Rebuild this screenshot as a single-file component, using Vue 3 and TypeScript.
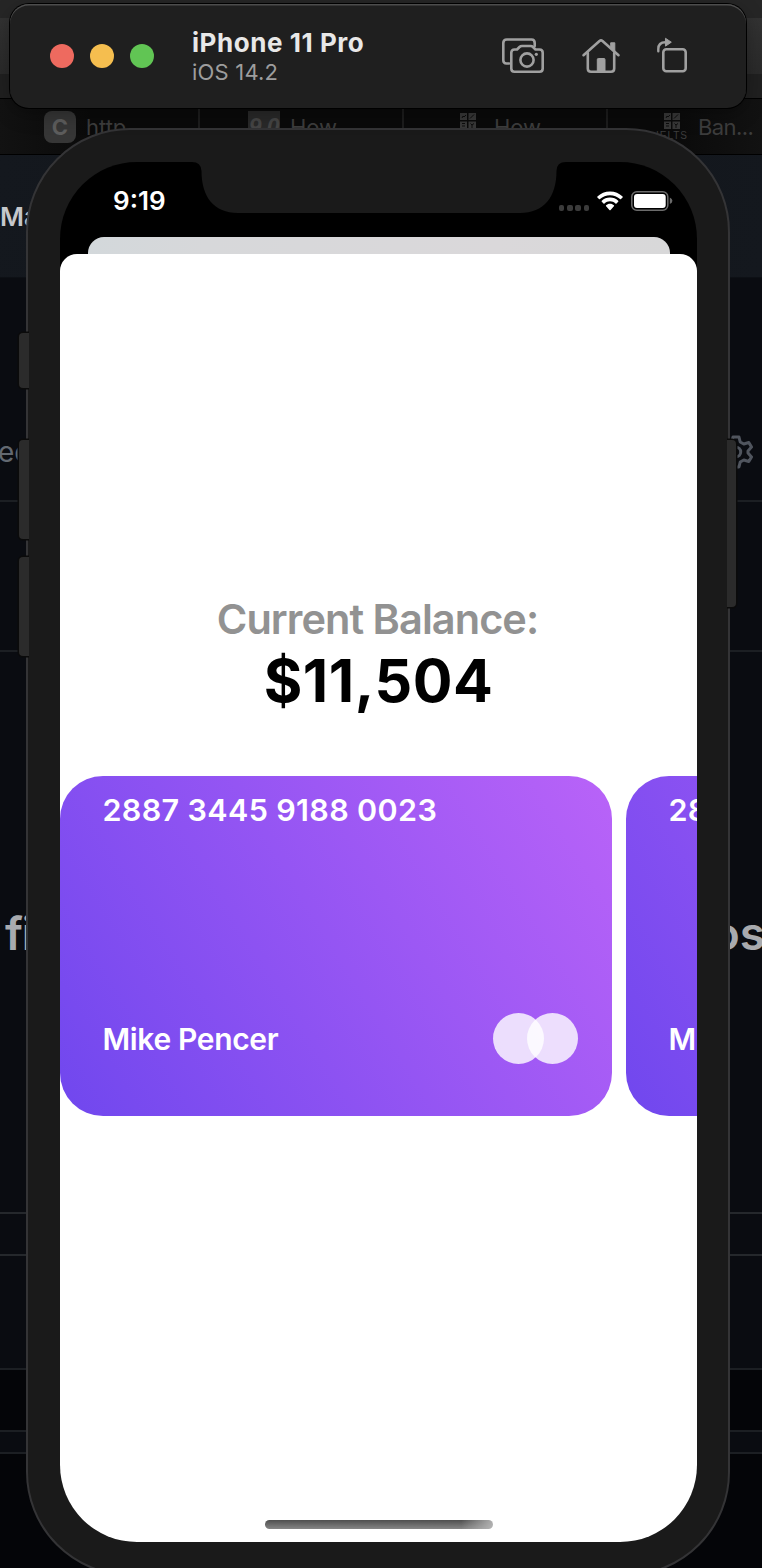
<script setup lang="ts">
interface Tab { icon: 'letter' | 'score' | 'ielts'; label: string }
interface BankCard { id: number; number: string; holder: string }

const tabs: Tab[] = [
  { icon: 'letter', label: 'http.' },
  { icon: 'score', label: 'How' },
  { icon: 'ielts', label: 'How' },
  { icon: 'ielts', label: 'Ban...' },
]
const cards: BankCard[] = [
  { id: 1, number: '2887 3445 9188 0023', holder: 'Mike Pencer' },
  { id: 2, number: '2887 3445 9188 0023', holder: 'Mike Pencer' },
]
</script>

<template>
  <div class="desktop">
    <div class="browser">
      <div class="chrome-top"></div>
      <div class="chrome-address"></div>
      <div class="chrome-bottom"></div>
      <div class="tabs">
        <div v-for="(tab, i) in tabs" :key="i" class="tab">
          <span v-if="tab.icon === 'letter'" class="fav-letter">C</span>
          <span v-else-if="tab.icon === 'score'" class="fav-score">9.0</span>
          <span v-else class="fav-ielts">
            <svg width="16" height="16" viewBox="0 0 16 16">
              <path d="M0 0h7v7H0zM8.500 0H16v7H8.500zM0 8.500h7V16H0zM8.500 8.500H16V16H8.500z" fill="#383838" />
              <path d="M2 5l1-2 1 1 2-2M10 5.500l4-4M2 10.500h3M2 13h3M10.500 10.500l1.500 1.500 2-1.500M12 12v3" stroke="#0c0c0c" fill="none" />
            </svg>
            <small>IELTS</small>
          </span>
          <span class="tab-label">{{ tab.label }}</span>
        </div>
      </div>
      <div class="page-head"><span>Ma</span></div>
      <div class="page-nav">
        <span>ec</span>
        <svg class="gear" width="34" height="34" viewBox="0 0 34 34" fill="none" stroke="#50555e" stroke-width="3">
          <circle cx="17" cy="17" r="4.700" />
          <path stroke-linejoin="round" d="M14 2h6l1.200 5 3.600 2 5-1.500 2.700 4.600L29 16v2l3.500 3.900-2.700 4.600-5-1.500-3.600 2-1.200 5h-6l-1.200-5-3.600-2-5 1.500-2.700-4.600L5 18v-2l-3.500-3.900 2.700-4.600 5 1.500 3.600-2z" />
        </svg>
      </div>
      <div class="row row-toolbar"></div>
      <div class="row row-hero"><span class="head">fi</span><span class="tail">os</span></div>
      <div class="row row-thin"></div>
      <div class="row row-list"></div>
      <div class="row row-gap"></div>
      <div class="row row-strip"></div>
      <div class="row row-foot"></div>
    </div>

    <div class="side-key key-mute"></div>
    <div class="side-key key-up"></div>
    <div class="side-key key-down"></div>
    <div class="phone">
      <div class="screen">
        <div class="back-sheet"></div>
        <div class="status">
          <span class="clock">9:19</span>
          <div class="indicators">
            <div class="dots"><i v-for="n in 4" :key="n"></i></div>
            <svg class="wifi" width="26" height="20" viewBox="0 0 26 20" fill="#fff">
              <path d="M13 .5C18 .5 22.300 2.400 25.600 5.500Q26 6 25.600 6.500L24 8.100Q23.500 8.500 23 8.100C20.200 5.500 16.800 4.200 13 4.200S5.800 5.500 3 8.100Q2.500 8.500 2 8.100L.4 6.500Q0 6 .4 5.500C3.700 2.400 8 .5 13 .5z" />
              <path d="M13 6.600c3.300 0 6 1.200 8.200 3.200q.5.500 0 1l-1.700 1.700q-.5.400-1 0C17 11.200 15.200 10.300 13 10.300s-4 .9-5.500 2.200q-.5.400-1 0L4.800 10.800q-.5-.5 0-1C7 7.800 9.700 6.600 13 6.600z" />
              <path d="M13 12.700c1.600 0 2.900.6 3.900 1.500q.5.500 0 1l-3.300 3.800q-.6.500-1.200 0l-3.300-3.800q-.5-.5 0-1c1-.9 2.300-1.500 3.900-1.500z" />
            </svg>
            <svg class="battery" width="42" height="20" viewBox="0 0 42 20">
              <rect x=".8" y=".8" width="36" height="18.400" rx="5" fill="none" stroke="#6b6b6b" stroke-width="1.500" />
              <rect x="3" y="3" width="31.700" height="14" rx="3" fill="#fff" />
              <path d="M38.800 6.500q2.600 1.200 2.600 3.300t-2.600 3.300z" fill="#6b6b6b" />
            </svg>
          </div>
        </div>
        <div class="sheet">
          <div class="balance">
            <span class="balance-label">Current Balance:</span>
            <span class="balance-value">$11,504</span>
          </div>
          <div class="cards">
            <div v-for="card in cards" :key="card.id" class="card">
              <span class="card-number">{{ card.number }}</span>
              <div class="card-foot">
                <span class="card-holder">{{ card.holder }}</span>
                <div class="brand"><i></i><i></i></div>
              </div>
            </div>
          </div>
          <div class="home-bar"></div>
        </div>
        <svg class="notch" width="380" height="52" viewBox="0 0 380 52">
          <path d="M0 0H4Q13 0 13.500 9C13.500 35 26 51 50 51H332C356 51 368.500 35 368.500 9Q368.500 0 378 0z" fill="#1a1a1a" />
        </svg>
      </div>
    </div>
    <div class="side-key key-power"></div>

    <div class="window-bar">
      <div class="lights"><i class="red"></i><i class="yellow"></i><i class="green"></i></div>
      <div class="titles">
        <span class="device">iPhone 11 Pro</span>
        <span class="os">iOS 14.2</span>
      </div>
      <div class="actions">
        <svg width="44" height="38" viewBox="0 0 44 38" fill="none" stroke="#a0a0a0" stroke-width="2.600" stroke-linejoin="round" stroke-linecap="round">
          <path d="M8 26.500H5.500Q2.300 26.500 2.300 23.300V6Q2.300 2.500 5.800 2.500H30.500Q33.700 2.500 33.700 6V9" />
          <path d="M13.500 12.500H16L18.500 10Q19.500 9 21 9H29.500Q31 9 32 10L34.500 12.500H38.500Q41.700 12.500 41.700 15.700V31.500Q41.700 34.700 38.500 34.700H13.500Q10.300 34.700 10.300 31.500V15.700Q10.300 12.500 13.500 12.500z" />
          <circle cx="26" cy="23" r="6.600" />
          <circle cx="35.300" cy="17.300" r="1.600" fill="#a0a0a0" stroke="none" />
        </svg>
        <svg width="40" height="38" viewBox="0 0 40 38" fill="none" stroke="#a0a0a0" stroke-width="2.600" stroke-linejoin="round" stroke-linecap="round">
          <path d="M2.500 18.200L18.500 4Q20 2.800 21.500 4L37.500 18.200" />
          <path d="M6.800 16V31.500Q6.800 34.700 10 34.700H30Q33.200 34.700 33.200 31.500V16" />
          <path d="M30 5.800H33.800V14.500L30 11.300z" fill="#a0a0a0" stroke-width="1" />
          <path d="M16.300 34V22.500Q16.300 21.500 17.300 21.500H23Q24 21.500 24 22.500V34z" fill="#a0a0a0" stroke-width="1" />
        </svg>
        <svg width="32" height="38" viewBox="0 0 32 38" fill="none" stroke="#a0a0a0" stroke-width="2.600" stroke-linejoin="round" stroke-linecap="round">
          <rect x="7.300" y="12.300" width="22.400" height="22" rx="3" />
          <path d="M2.300 14.200V12Q2.300 5.200 9.500 5.200H10" stroke-width="2.400" />
          <path d="M9.800 1.500L15.300 5.200L9.800 8.900z" fill="#a0a0a0" stroke-width="1" />
        </svg>
      </div>
    </div>
  </div>
</template>

<style>
body { margin: 0; background: #05070a; }
</style>

<style scoped>
.desktop {
  position: relative;
  width: 762px;
  height: 1568px;
  overflow: hidden;
  font-family: Inter, "Liberation Sans", sans-serif;
  background: #05070a;
}
.browser, .browser div { box-sizing: border-box; }
.browser { display: flex; flex-direction: column; width: 762px; }
.chrome-top { height: 18px; background: #262626; }
.chrome-address { height: 56px; background: linear-gradient(#323232, #2a2a2a); }
.chrome-bottom { height: 25px; background: #202020; border-bottom: 1px solid #000; }
.tabs {
  display: flex;
  height: 56px;
  background: linear-gradient(90deg, #121212, #0a0a0a 12%, #0a0a0a 88%, #121212);
  border-bottom: 1px solid #000;
}
.tab {
  display: flex;
  align-items: center;
  justify-content: center;
  gap: 10px;
  width: 204px;
  flex: none;
  height: 55px;
  padding-top: 1px;
  border-right: 2px solid #1d1d1d;
  color: #3d3d3d;
  font-size: 22px;
}
.tab:first-child { width: 200px; justify-content: flex-start; padding-left: 44px; }
.tab:nth-child(2) { padding-right: 17px; }
.tab:nth-child(3) { padding-right: 17px; }
.tab:last-child { justify-content: flex-start; padding-left: 48px; border: 0; letter-spacing: -0.600px; }
.fav-letter {
  width: 32px; height: 32px; border-radius: 8px; background: #363636;
  color: #5d5d5d; font-weight: 700; line-height: 32px; text-align: center;
}
.fav-score {
  width: 32px; height: 32px; background: #292929; color: #454545;
  font: italic bold 23px/32px "Liberation Sans", sans-serif; text-align: center; letter-spacing: -0.500px;
}
.fav-ielts { display: flex; flex-direction: column; align-items: center; width: 32px; gap: 2px; }
.fav-ielts svg { display: block; }
.fav-ielts small { font: 10px/10px "Liberation Sans", sans-serif; letter-spacing: 1px; }
.page-head {
  height: 123px;
  background: linear-gradient(100deg, #14181e, #11151b 50%, #14181e);
  border-bottom: 1px solid #0d1015;
  color: #c5c7cb;
  font-size: 26px;
  font-weight: 600;
  line-height: 124px;
}
.page-nav {
  display: flex;
  justify-content: space-between;
  align-items: flex-end;
  height: 222px;
  padding: 0 9px 31px 0;
  background: #0a0c11;
  color: #636971;
  font-size: 28px;
}
.page-nav span { margin-left: -2px; line-height: 34px; }
.gear { display: block; }
.row { background: #0a0c11; border-top: 2px solid #1c1f23; }
.row-toolbar { height: 150px; }
.row-hero {
  height: 562px;
  display: flex;
  justify-content: space-between;
  padding: 253px 0 0 5px;
  color: #a8aaae;
  font-size: 46px;
  line-height: 56px;
  font-weight: 600;
}
.row-hero .head { letter-spacing: -1.500px; font-feature-settings: "liga" 0, "calt" 0; }
.row-hero .tail { margin-right: -3px; }
.row-thin { height: 42px; border-color: #25282c; }
.row-list { height: 114px; border-color: #25282c; }
.row-gap { height: 62px; background: #040508; }
.row-strip { height: 22px; }
.row-foot { height: 116px; background: #040508; }

.phone {
  position: absolute;
  left: 26px;
  top: 128px;
  width: 704px;
  height: 1448px;
  box-sizing: border-box;
  border: 2px solid #343436;
  border-radius: 104px;
  background: #1a1a1a;
  padding: 32px 31px 32px 32px;
}
.screen {
  position: relative;
  display: flex;
  flex-direction: column;
  width: 637px;
  height: 1380px;
  overflow: hidden;
  border-radius: 77px;
  background: #000;
}
.notch { position: absolute; left: 128px; top: 0; }
.status {
  display: flex;
  justify-content: space-between;
  box-sizing: border-box;
  height: 92px;
  flex: none;
  padding: 22px 24px 0 53px;
  color: #fff;
}
.clock { font-size: 26px; line-height: 34px; font-weight: 600; }
.indicators { display: flex; align-items: flex-start; padding-top: 7px; }
.dots { display: flex; gap: 2.700px; padding-top: 14px; margin-right: 7.500px; }
.dots i { width: 5.500px; height: 5.500px; border-radius: 2px; background: #3b3b3b; }
.wifi { margin-right: 8.500px; }
.back-sheet {
  position: absolute;
  left: 27.500px; top: 75px; width: 582px; height: 30px;
  border-radius: 16px 16px 0 0;
  background: linear-gradient(90deg, #d3d8db, #d7d8da 20%, #dad8da 70%, #d8d8d9);
}
.sheet {
  position: relative;
  display: flex;
  flex-direction: column;
  flex: 1;
  background: #fff;
  border-radius: 17px 17px 0 0;
}
.balance {
  display: flex;
  flex-direction: column;
  align-items: center;
  height: 521.500px;
  padding-top: 340px;
  box-sizing: border-box;
}
.balance-label { color: #929292; font-size: 41.500px; line-height: 50px; font-weight: 600; letter-spacing: -0.950px; margin-right: 2px; white-space: nowrap; }
.balance-value { color: #000; font-size: 59px; line-height: 73px; font-weight: 700; letter-spacing: 0.500px; }
.cards { display: flex; gap: 14px; width: 637px; overflow: hidden; }
.card {
  display: flex;
  flex-direction: column;
  justify-content: space-between;
  flex: none;
  width: 552px;
  height: 340px;
  box-sizing: border-box;
  padding: 16.500px 34px 51.500px 42.500px;
  border-radius: 43px;
  background: linear-gradient(58.400deg, #7047ee, #b963f8);
  color: #fff;
  font-size: 30px;
  font-weight: 600;
  line-height: 36px;
  white-space: nowrap;
}
.card-number { font-size: 30.500px; letter-spacing: 0.350px; }
.card-holder { letter-spacing: -0.350px; }
.card-foot { display: flex; justify-content: space-between; align-items: center; }
.brand { display: flex; }
.brand i { width: 51px; height: 51px; border-radius: 50%; background: rgba(255, 255, 255, 0.8); }
.brand i + i { margin-left: -17px; }
.home-bar {
  width: 228px;
  height: 9px;
  margin: auto auto 13px 205px;
  border-radius: 5px;
  background: linear-gradient(90deg, transparent 86%, rgba(190, 190, 190, 0.85)), linear-gradient(#4e4e4e, #858585);
}
.side-key {
  position: absolute;
  left: 19px;
  width: 10px;
  box-sizing: border-box;
  background: #2b2b2b;
  border-radius: 4px 0 0 4px;
  box-shadow: 0 0 0 1.500px #0b0b0b;
  z-index: 1;
  clip-path: inset(-3px 0 -3px -3px);
}
.key-mute { top: 333px; height: 55px; }
.key-up { top: 440px; height: 99px; }
.key-down { top: 557px; height: 99px; }
.key-power { left: 727px; top: 440px; width: 8.500px; height: 167px; border-radius: 0 4px 4px 0; clip-path: inset(-3px -3px -3px 0); }

.window-bar {
  position: absolute;
  left: 10px;
  top: 4px;
  width: 736px;
  height: 104px;
  box-sizing: border-box;
  display: flex;
  align-items: center;
  border-radius: 19px;
  background: #1f1f1f;
  box-shadow: 0 0 0 1px #000, inset 0 1.500px 0 #4d4d4d, 0 6px 20px rgba(0, 0, 0, 0.3);
  padding: 0 58px 0 40px;
  z-index: 2;
}
.lights { display: flex; gap: 16px; width: 142px; }
.lights i { width: 24px; height: 24px; border-radius: 50%; }
.red { background: #ee6a5f; }
.yellow { background: #f5be4f; }
.green { background: #61c554; }
.titles { display: flex; flex-direction: column; flex: 1; white-space: nowrap; }
.device { color: #e8e8e8; font-size: 26px; font-weight: 700; line-height: 32px; letter-spacing: 0.550px; }
.os { color: #9d9d9d; font-size: 22px; line-height: 27px; letter-spacing: 0.200px; }
.actions { display: flex; align-items: center; }
.actions svg { display: block; }
.actions svg + svg { margin-left: 35.500px; }
</style>
